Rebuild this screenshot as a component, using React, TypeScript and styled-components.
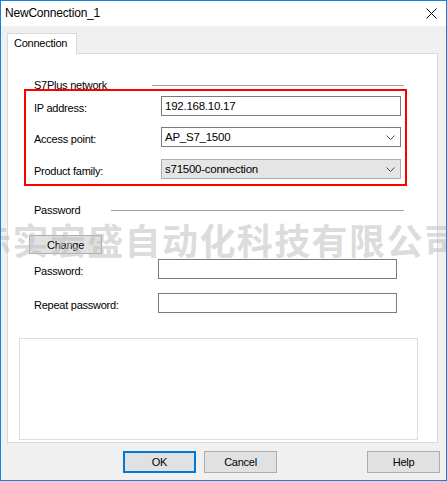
import React from "react";
import styled, { createGlobalStyle } from "styled-components";

const Global = createGlobalStyle`
  html, body { margin: 0; padding: 0; background: #ffffff; }
  body { font-family: "Liberation Sans", Arial, sans-serif; }
  * { box-sizing: border-box; }
`;

const Window = styled.div`
  position: relative;
  width: 447px;
  height: 481px;
  border: 1px solid #1a7fd6;
  display: flex;
  flex-direction: column;
  overflow: hidden;
  background: #f0f0f0;
  font-family: "Liberation Sans", Arial, sans-serif;
  font-size: 11px;
  letter-spacing: -0.25px;
  color: #000;
`;

const TitleBar = styled.div`
  height: 25px;
  flex: none;
  background: #ffffff;
  display: flex;
  align-items: center;
  justify-content: space-between;
  padding: 0 9px 1px 4px;
`;

const Title = styled.span`
  font-size: 12px;
  letter-spacing: -0.2px;
`;

const Body = styled.div`
  flex: 1;
  display: flex;
  flex-direction: column;
  padding: 7px 8px 7px 6px;
`;

const TabStrip = styled.div`
  display: flex;
  height: 20px;
  position: relative;
  z-index: 1;
`;

const Tab = styled.div`
  width: 70px;
  height: 21px;
  background: #ffffff;
  border: 1px solid #d9d9d9;
  border-bottom: none;
  padding: 3px 0 0 6px;
`;

const Panel = styled.div`
  position: relative;
  height: 390px;
  background: #ffffff;
  border: 1px solid #d9d9d9;
  display: flex;
  flex-direction: column;
`;

const GroupHeader = styled.div<{ $lineStart: number; $mt: number }>`
  display: grid;
  grid-template-columns: ${(p) => p.$lineStart}px 1fr;
  align-items: center;
  height: 14px;
  margin-top: ${(p) => p.$mt}px;
  padding: 0 33px 0 26px;
`;

const GroupLine = styled.div`
  height: 1px;
  background: #a0a0a0;
  margin-top: 1px;
`;

const FieldRow = styled.div<{ $mt: number; $inputLeft: number }>`
  display: grid;
  grid-template-columns: ${(p) => p.$inputLeft - 26}px auto;
  align-items: center;
  margin-top: ${(p) => p.$mt}px;
  padding-left: 26px;
`;

const Label = styled.span`
  padding-top: 3px;
`;

const TextBox = styled.div<{ $width: number }>`
  width: ${(p) => p.$width}px;
  height: 20px;
  border: 1px solid #7a7a7a;
  background: #ffffff;
  display: flex;
  align-items: center;
  padding-left: 3px;
  font-size: 11.5px;
`;

const Combo = styled.div<{ $disabled?: boolean }>`
  width: 240px;
  height: 20px;
  border: 1px solid ${(p) => (p.$disabled ? "#adadad" : "#7a7a7a")};
  background: ${(p) => (p.$disabled ? "#e5e5e5" : "#ffffff")};
  display: flex;
  align-items: center;
  justify-content: space-between;
  padding: 0 5px 0 3px;
  font-size: 11.5px;
`;

const Button = styled.button<{ $default?: boolean }>`
  width: 73px;
  height: 22px;
  padding: 0;
  background: #e1e1e1;
  border: ${(p) => (p.$default ? "2px solid #0078d7" : "1px solid #adadad")};
  font-family: "Liberation Sans", Arial, sans-serif;
  font-size: 11px;
  letter-spacing: -0.25px;
  color: #000;
`;

const ChangeButton = styled(Button)`
  width: 73px;
  height: 19px;
  margin: 18px 0 0 21px;
`;

const DescriptionBox = styled.div`
  width: 399px;
  height: 102px;
  margin: 25px 0 0 11px;
  border: 1px solid #dcdcdc;
  background: #ffffff;
`;

const ButtonRow = styled.div`
  display: flex;
  gap: 8px;
  margin: 8px -2px 0 0;
  padding-left: 116px;
`;

const HelpButton = styled(Button)`
  margin-left: auto;
`;

const Highlight = styled.div`
  position: absolute;
  left: 16px;
  top: 35px;
  width: 383px;
  height: 97px;
  border: 2px solid #ff0000;
  pointer-events: none;
`;

const Watermark = styled.div`
  position: absolute;
  left: -26px;
  top: 220px;
  font-family: "Noto Sans CJK SC", sans-serif;
  font-weight: 700;
  font-size: 36px;
  line-height: 1;
  letter-spacing: 1.4px;
  white-space: nowrap;
  color: rgba(190, 190, 190, 0.55);
  pointer-events: none;
  z-index: 5;
`;

const Chevron = () => (
  <svg width="9" height="5" viewBox="0 0 9 5">
    <path d="M0.5 0.5 L4.5 4.5 L8.5 0.5" fill="none" stroke="#4a4a4a" strokeWidth="1" />
  </svg>
);

const CloseIcon = () => (
  <svg width="11" height="11" viewBox="0 0 11 11">
    <path d="M0.5 0.5 L10.5 10.5 M10.5 0.5 L0.5 10.5" stroke="#000" strokeWidth="1" />
  </svg>
);

export default function App() {
  return (
    <>
      <Global />
      <Window>
        <TitleBar>
          <Title>NewConnection_1</Title>
          <CloseIcon />
        </TitleBar>
        <Body>
          <TabStrip>
            <Tab>Connection</Tab>
          </TabStrip>
          <Panel>
            <GroupHeader $lineStart={118} $mt={24}>
              <span>S7Plus network</span>
              <GroupLine />
            </GroupHeader>
            <FieldRow $mt={4} $inputLeft={153}>
              <Label>IP address:</Label>
              <TextBox $width={240}>192.168.10.17</TextBox>
            </FieldRow>
            <FieldRow $mt={11} $inputLeft={153}>
              <Label>Access point:</Label>
              <Combo>
                <span>AP_S7_1500</span>
                <Chevron />
              </Combo>
            </FieldRow>
            <FieldRow $mt={12} $inputLeft={153}>
              <Label>Product family:</Label>
              <Combo $disabled>
                <span>s71500-connection</span>
                <Chevron />
              </Combo>
            </FieldRow>
            <GroupHeader $lineStart={77} $mt={24}>
              <span>Password</span>
              <GroupLine />
            </GroupHeader>
            <ChangeButton>Change</ChangeButton>
            <FieldRow $mt={5} $inputLeft={150}>
              <Label>Password:</Label>
              <TextBox $width={239} />
            </FieldRow>
            <FieldRow $mt={14} $inputLeft={150}>
              <Label>Repeat password:</Label>
              <TextBox $width={239} />
            </FieldRow>
            <DescriptionBox />
            <Highlight />
          </Panel>
          <ButtonRow>
            <Button $default>OK</Button>
            <Button>Cancel</Button>
            <HelpButton>Help</HelpButton>
          </ButtonRow>
        </Body>
        <Watermark>赤实宏盛自动化科技有限公司</Watermark>
      </Window>
    </>
  );
}
